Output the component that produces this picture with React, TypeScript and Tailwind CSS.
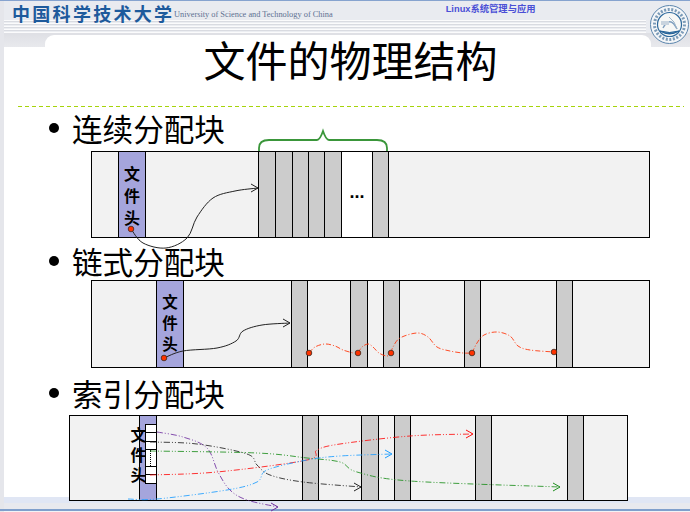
import React from "react";

type P = [number, number];

function smooth(pts: P[]): string {
  let d = `M${pts[0][0]} ${pts[0][1]}`;
  for (let i = 0; i < pts.length - 1; i++) {
    const p0 = pts[Math.max(i - 1, 0)];
    const p1 = pts[i];
    const p2 = pts[i + 1];
    const p3 = pts[Math.min(i + 2, pts.length - 1)];
    const c1x = p1[0] + (p2[0] - p0[0]) / 6;
    const c1y = p1[1] + (p2[1] - p0[1]) / 6;
    const c2x = p2[0] - (p3[0] - p1[0]) / 6;
    const c2y = p2[1] - (p3[1] - p1[1]) / 6;
    d += ` C${c1x} ${c1y} ${c2x} ${c2y} ${p2[0]} ${p2[1]}`;
  }
  return d;
}

function Head({ x, y, color }: { x: number; y: number; color: string }) {
  return <path d={`M${x - 7} ${y - 4} L${x} ${y} L${x - 7} ${y + 4}`} fill="none" stroke={color} strokeWidth={1} />;
}

const chain: P[][] = [
  [[309, 353], [315, 347], [325, 344], [335, 346], [343, 350], [353, 353]],
  [[358, 353], [362, 347], [368, 344], [373, 347], [379, 353], [387, 356], [391, 353]],
  [[391, 353], [393, 347], [400, 338], [417, 333], [428, 337], [437, 347], [450, 351], [463, 353], [472, 353]],
  [[472, 353], [477, 343], [484, 335], [497, 332], [510, 336], [518, 346], [530, 350], [554, 352]],
];

const index: { color: string; pts: P[]; end?: P }[] = [
  { color: "#7030a0", pts: [[157, 432], [183, 437], [207, 448], [218, 472], [230, 490], [247, 500], [278, 507]], end: [278, 507] },
  { color: "#222222", pts: [[150, 442], [197, 444], [247, 454], [257, 465], [270, 475], [303, 482], [361, 487]], end: [361, 487] },
  { color: "#1f8f1f", pts: [[150, 451], [257, 453], [307, 458], [340, 462], [357, 472], [410, 481], [560, 487]], end: [560, 487] },
  { color: "#ff1010", pts: [[150, 475], [217, 472], [307, 460], [317, 450], [340, 444], [410, 436], [473, 434]], end: [473, 434] },
  { color: "#1e9eff", pts: [[128, 499], [157, 499], [227, 490], [257, 482], [267, 470], [307, 460], [340, 456], [392, 454]], end: [392, 454] },
];

const dots: P[] = [[131, 229], [164, 358], [309, 353], [358, 353], [391, 353], [472, 353], [554, 352]];

function Overlay() {
  return (
    <svg className="absolute inset-0 z-20 pointer-events-none" width={690} height={512} viewBox="0 0 690 512">
      <path d="M259 151 V148 Q259 140 269 140 H317 Q320 140 323 131 Q326 140 329 140 H377 Q387 140 387 148 V151" fill="none" stroke="#3a963a" strokeWidth={1.8} />
      <path d={smooth([[131, 229], [143, 243], [166, 248], [187, 238], [197, 217], [213, 198], [235, 191], [258, 188]])} fill="none" stroke="#222" strokeWidth={1} />
      <Head x={258} y={188} color="#222" />
      <path d={smooth([[164, 358], [183, 351], [217, 348], [236, 341], [243, 331], [262, 325], [290, 323]])} fill="none" stroke="#222" strokeWidth={1} />
      <Head x={290} y={323} color="#222" />
      {chain.map((c, i) => (
        <path key={i} d={smooth(c)} fill="none" stroke="#ff3a10" strokeOpacity={0.9} strokeWidth={1} strokeDasharray="5 2 1 2" />
      ))}
      {index.map((l, i) => (
        <g key={i}>
          <path d={smooth(l.pts)} fill="none" stroke={l.color} strokeOpacity={0.85} strokeWidth={1} strokeDasharray="6 2 1 2 1 2" />
          {l.end && <Head x={l.end[0]} y={l.end[1]} color={l.color} />}
        </g>
      ))}
      {dots.map(([x, y], i) => (
        <circle key={i} cx={x} cy={y} r={2.8} fill="#ff3300" stroke="#3a2a20" strokeWidth={0.8} />
      ))}
    </svg>
  );
}

function Seal() {
  return (
    <svg className="absolute left-[650px] top-[5px] z-10" width={39} height={39} viewBox="0 0 39 39">
      <circle cx={19.5} cy={19.5} r={19} fill="#f4f6f8" stroke="#5c86ad" strokeWidth={1} />
      <circle cx={19.5} cy={19.5} r={15} fill="none" stroke="#3b6a95" strokeWidth={3} strokeDasharray="2 1.6" strokeOpacity={0.65} />
      <circle cx={19.5} cy={19.5} r={12} fill="#f7f8f6" stroke="#2f6a9c" strokeWidth={1.2} />
      <path d="M13 23 Q20 10 27 24" fill="none" stroke="#7f9fbf" strokeWidth={1.4} />
      <path d="M19 12 Q25 16 27 24" fill="none" stroke="#9db5c9" strokeWidth={1} />
      <rect x={11} y={16} width={8} height={4} fill="#c9d4de" />
      <path d="M10 26 Q19.5 32 29 26 Q19.5 29 10 26Z" fill="#1f5f96" stroke="#1f5f96" strokeWidth={1} />
    </svg>
  );
}

function FileHead({ cls }: { cls: string }) {
  return (
    <div className={`flex flex-col items-center font-bold text-black ${cls}`}>
      <span>文</span>
      <span>件</span>
      <span>头</span>
    </div>
  );
}

function Bullet({ label, cls }: { label: string; cls: string }) {
  return (
    <div className={`flex items-center ${cls}`}>
      <span className="ml-[45px] w-[10px] h-[10px] rounded-full bg-black"></span>
      <span className="ml-[13px] text-[30.6px] leading-[36px] text-black">{label}</span>
    </div>
  );
}

const grayBlock = "h-full shrink-0 bg-[#cccccc] border-x border-black";

export default function App() {
  return (
    <div className="relative w-[690px] h-[512px] overflow-hidden bg-white flex flex-col font-['Noto_Sans_CJK_SC','Noto_Sans',sans-serif]">
      <div className="h-px shrink-0 bg-[#86a3cf]"></div>
      <div className="flex-1 flex flex-col min-h-0 border-l-4 border-[#e5e6eb]">
        {/* header */}
        <div className="h-[34px] shrink-0 flex flex-col bg-[#e9ebf0]">
          <div className="relative z-10 h-[19px] flex items-start">
            <span className="ml-[8px] mt-[0px] w-[162px] shrink-0 text-[18px] leading-[24px] font-bold tracking-[2.3px] text-[#1d5a9c] whitespace-nowrap">中国科学技术大学</span>
            <span className="mt-[8px] text-[8.35px] leading-[11px] text-[#5d7090] whitespace-nowrap font-['Liberation_Serif',serif]">University of Science and Technology of China</span>
            <span className="ml-[113px] mt-[2px] text-[9.3px] leading-[12px] font-bold text-[#4a4fd6] whitespace-nowrap font-['Liberation_Sans','Noto_Sans_CJK_SC',sans-serif]">Linux系统管理与应用</span>
          </div>
          <div className="h-[13px] mr-[44px] bg-[repeating-linear-gradient(180deg,#fbfbfc_0_1px,#d9dbe1_1px_2px,#eceef2_2px_3px)]"></div>
          <div className="flex-1 bg-[#dfe0e5]"></div>
        </div>
        <div className="h-[12px] shrink-0 bg-[linear-gradient(180deg,#e0e1e6,#e8e9ed)] flex">
          <div className="ml-[41px] mr-[39px] flex-1 bg-white rounded-t-[9px]"></div>
        </div>
        {/* title */}
        <div className="-mt-[12px] relative h-[71px] shrink-0 flex justify-center items-center pl-[7px] pb-[24px]">
          <h1 className="text-[42px] leading-[54px] font-normal text-black whitespace-nowrap">文件的物理结构</h1>
        </div>
        <div className="h-px shrink-0 ml-[14px] w-[666px] bg-[repeating-linear-gradient(90deg,#a6d40a_0_4px,transparent_4px_7px)]"></div>

        {/* section 1 */}
        <Bullet label="连续分配块" cls="mt-[3px] h-[36px]" />
        <div className="mt-[5px] ml-[87px] w-[559px] h-[87px] shrink-0 border border-black bg-[#f2f2f2] flex">
          <div className="ml-[26px] w-[28px] h-full shrink-0 bg-[#a5a5dc] border-x border-black">
            <FileHead cls="pt-[10px] text-[16px] leading-[22px]" />
          </div>
          <div className={`ml-[112px] w-[18px] ${grayBlock}`}></div>
          <div className={`-ml-px w-[18px] ${grayBlock}`}></div>
          <div className={`-ml-px w-[17px] ${grayBlock}`}></div>
          <div className={`-ml-px w-[17px] ${grayBlock}`}></div>
          <div className={`-ml-px w-[18px] ${grayBlock}`}></div>
          <div className="w-[30px] h-full shrink-0 bg-white flex items-center justify-center">
            <span className="text-[18px] leading-[18px] font-bold font-['Liberation_Sans',sans-serif] text-black -mt-[6px]">...</span>
          </div>
          <div className={`w-[17px] ${grayBlock}`}></div>
        </div>

        {/* section 2 */}
        <Bullet label="链式分配块" cls="mt-[5px] h-[36px]" />
        <div className="mt-[1px] ml-[87px] w-[559px] h-[88px] shrink-0 border border-black bg-[#f2f2f2] flex">
          <div className="ml-[64px] w-[28px] h-full shrink-0 bg-[#a5a5dc] border-x border-black">
            <FileHead cls="pt-[10px] text-[15.5px] leading-[21px]" />
          </div>
          <div className={`ml-[107px] w-[17px] ${grayBlock}`}></div>
          <div className={`ml-[42px] w-[18px] ${grayBlock}`}></div>
          <div className={`ml-[15px] w-[17px] ${grayBlock}`}></div>
          <div className={`ml-[64px] w-[17px] ${grayBlock}`}></div>
          <div className={`ml-[75px] w-[17px] ${grayBlock}`}></div>
        </div>

        {/* section 3 */}
        <Bullet label="索引分配块" cls="mt-[7px] h-[36px]" />
        <div className="relative z-10 mt-[4px] -mb-[20px] ml-[65px] w-[559px] h-[86px] shrink-0 border border-black bg-[#f2f2f2] flex">
          <div className="relative ml-[69px] w-[18px] h-full shrink-0 bg-[#a5a5dc] border-x border-black">
            <FileHead cls="-ml-[10px] w-[17px] pt-[8px] text-[16px] leading-[20px]" />
            <div className="absolute left-[5px] top-[8px] w-[12px] h-[60px] flex flex-col bg-white border border-black">
              <div className="h-[8px] border-b border-black"></div>
              <div className="h-[9px] border-b border-black"></div>
              <div className="h-[8px] border-b border-black"></div>
              <div className="h-[17px] border-b border-black">
                <div className="ml-[4px] h-full border-l border-dotted border-black"></div>
              </div>
              <div className="h-[8px] border-b border-black"></div>
            </div>
          </div>
          <div className={`ml-[145px] w-[17px] ${grayBlock}`}></div>
          <div className={`ml-[42px] w-[18px] ${grayBlock}`}></div>
          <div className={`ml-[15px] w-[17px] ${grayBlock}`}></div>
          <div className={`ml-[64px] w-[17px] ${grayBlock}`}></div>
          <div className={`ml-[75px] w-[17px] ${grayBlock}`}></div>
        </div>

        {/* footer */}
        <div className="mt-auto h-[15px] shrink-0 flex flex-col">
          <div className="h-[6px] bg-[#e0e6f4]"></div>
          <div className="h-[6px] bg-[#e8e9ee]"></div>
          <div className="h-[2px] -ml-1 bg-[#7f9fcc]"></div>
          <div className="h-px bg-[#f2f3f6]"></div>
        </div>
      </div>
      <Seal />
      <Overlay />
    </div>
  );
}
